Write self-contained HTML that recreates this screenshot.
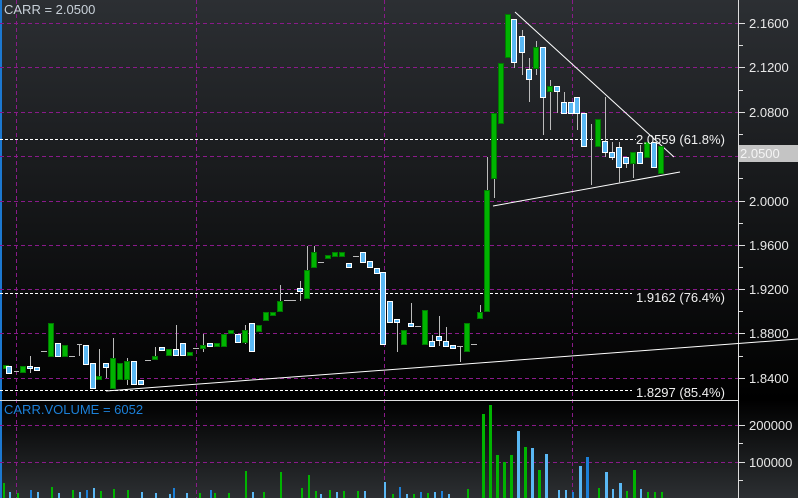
<!DOCTYPE html>
<html><head><meta charset="utf-8"><style>
html,body{margin:0;padding:0;background:#000;}
svg{display:block;font-family:"Liberation Sans",sans-serif;}
</style></head><body>
<svg width="798" height="498" viewBox="0 0 798 498" xmlns="http://www.w3.org/2000/svg">
<defs>
<linearGradient id="g1" x1="0" y1="0" x2="0" y2="1"><stop offset="0" stop-color="#2c2f33"/><stop offset="1" stop-color="#000"/></linearGradient>
<linearGradient id="g2" x1="0" y1="0" x2="0" y2="1"><stop offset="0" stop-color="#000"/><stop offset="1" stop-color="#2c2f32"/></linearGradient>
</defs>
<rect x="0" y="0" width="798" height="400" fill="url(#g1)"/>
<rect x="0" y="400" width="798" height="98" fill="url(#g2)"/>
<rect x="0" y="0" width="2" height="498" fill="#1c78d0"/>
<!-- grid -->
<g stroke="#8a1a8a" stroke-width="1" stroke-dasharray="4,3">
<line x1="0" y1="23.5" x2="738" y2="23.5"/><line x1="0" y1="67.5" x2="738" y2="67.5"/><line x1="0" y1="112.5" x2="738" y2="112.5"/><line x1="0" y1="156.5" x2="738" y2="156.5"/><line x1="0" y1="201.5" x2="738" y2="201.5"/><line x1="0" y1="245.5" x2="738" y2="245.5"/><line x1="0" y1="289.5" x2="738" y2="289.5"/><line x1="0" y1="333.5" x2="738" y2="333.5"/><line x1="0" y1="378.5" x2="738" y2="378.5"/>
<line x1="0" y1="425.5" x2="738" y2="425.5"/><line x1="0" y1="462.5" x2="738" y2="462.5"/>
<line x1="16.5" y1="0" x2="16.5" y2="498"/><line x1="196.5" y1="0" x2="196.5" y2="498"/><line x1="384.5" y1="0" x2="384.5" y2="498"/><line x1="572.5" y1="0" x2="572.5" y2="498"/>
</g>
<g stroke="#fff" stroke-width="1" stroke-dasharray="3,2">
<line x1="0" y1="139.5" x2="636" y2="139.5"/><line x1="0" y1="293.5" x2="632" y2="293.5"/><line x1="0" y1="390.5" x2="632" y2="390.5"/>
</g>
<!-- axis -->
<line x1="738.5" y1="0" x2="738.5" y2="498" stroke="#ddd"/>
<line x1="0" y1="400.5" x2="738" y2="400.5" stroke="#ddd"/>
<g stroke="#ddd"><line x1="739" y1="23.5" x2="745" y2="23.5"/><line x1="739" y1="45.5" x2="743" y2="45.5"/><line x1="739" y1="67.5" x2="745" y2="67.5"/><line x1="739" y1="90.5" x2="743" y2="90.5"/><line x1="739" y1="112.5" x2="745" y2="112.5"/><line x1="739" y1="134.5" x2="743" y2="134.5"/><line x1="739" y1="178.5" x2="743" y2="178.5"/><line x1="739" y1="201.5" x2="745" y2="201.5"/><line x1="739" y1="223.5" x2="743" y2="223.5"/><line x1="739" y1="245.5" x2="745" y2="245.5"/><line x1="739" y1="267.5" x2="743" y2="267.5"/><line x1="739" y1="289.5" x2="745" y2="289.5"/><line x1="739" y1="311.5" x2="743" y2="311.5"/><line x1="739" y1="333.5" x2="745" y2="333.5"/><line x1="739" y1="356.5" x2="743" y2="356.5"/><line x1="739" y1="378.5" x2="745" y2="378.5"/><line x1="739" y1="425.5" x2="745" y2="425.5"/><line x1="739" y1="443.5" x2="743" y2="443.5"/><line x1="739" y1="462.5" x2="745" y2="462.5"/><line x1="739" y1="480.5" x2="743" y2="480.5"/></g>
<g fill="#e8e8e8" font-size="13">
<text x="749" y="28">2.1600</text><text x="749" y="72">2.1200</text><text x="749" y="117">2.0800</text><text x="749" y="206">2.0000</text><text x="749" y="250">1.9600</text><text x="749" y="294">1.9200</text><text x="749" y="338">1.8800</text><text x="749" y="383">1.8400</text>
<text x="749" y="430">200000</text><text x="749" y="467">100000</text>
</g>
<rect x="739" y="145" width="59" height="17" fill="#c4c4c4"/>
<text x="740" y="158" fill="#f4f4f4" font-size="13">2.0500</text>
<text x="4" y="14" fill="#c8d0d8" font-size="13">CARR = 2.0500</text>
<text x="4" y="414" fill="#1c80d8" font-size="13">CARR.VOLUME = 6052</text>
<!-- trendlines -->
<g stroke="#fff" stroke-width="1" fill="none">
<polyline points="515,12 674,157"/>
<polyline points="493,206 680,172"/>
<polyline points="106,391 798,339"/>
</g>
<!-- wicks -->
<g stroke="#bbb" stroke-width="1">
<line x1="30.5" y1="356" x2="30.5" y2="373"/><line x1="79.5" y1="344" x2="79.5" y2="356"/><line x1="99.5" y1="349" x2="99.5" y2="379"/><line x1="106.5" y1="363" x2="106.5" y2="378"/><line x1="113.5" y1="338" x2="113.5" y2="388"/><line x1="127.5" y1="358" x2="127.5" y2="385"/><line x1="155.5" y1="347" x2="155.5" y2="359"/><line x1="176.5" y1="325" x2="176.5" y2="355"/><line x1="203.5" y1="334" x2="203.5" y2="352"/><line x1="245.5" y1="325" x2="245.5" y2="344"/><line x1="280.5" y1="285" x2="280.5" y2="311"/><line x1="300.5" y1="281" x2="300.5" y2="301"/><line x1="307.5" y1="246" x2="307.5" y2="298"/><line x1="314.5" y1="246" x2="314.5" y2="267"/><line x1="397.5" y1="319" x2="397.5" y2="352"/><line x1="411.5" y1="303" x2="411.5" y2="326"/><line x1="432.5" y1="335" x2="432.5" y2="346"/><line x1="439.5" y1="316" x2="439.5" y2="346"/><line x1="446.5" y1="327" x2="446.5" y2="346"/><line x1="460.5" y1="346" x2="460.5" y2="362"/><line x1="480.5" y1="305" x2="480.5" y2="318"/><line x1="487.5" y1="157" x2="487.5" y2="311"/><line x1="494.5" y1="113" x2="494.5" y2="198"/><line x1="514.5" y1="19" x2="514.5" y2="68"/><line x1="522.5" y1="30" x2="522.5" y2="75"/><line x1="529.5" y1="58" x2="529.5" y2="102"/><line x1="536.5" y1="41" x2="536.5" y2="75"/><line x1="543.5" y1="47" x2="543.5" y2="135"/><line x1="550.5" y1="80" x2="550.5" y2="130"/><line x1="557.5" y1="86" x2="557.5" y2="113"/><line x1="564.5" y1="92" x2="564.5" y2="113"/><line x1="577.5" y1="97" x2="577.5" y2="130"/><line x1="591.5" y1="124" x2="591.5" y2="185"/><line x1="605.5" y1="97" x2="605.5" y2="157"/><line x1="612.5" y1="142" x2="612.5" y2="160"/><line x1="619.5" y1="142" x2="619.5" y2="183"/><line x1="626.5" y1="157" x2="626.5" y2="168"/><line x1="633.5" y1="152" x2="633.5" y2="178"/><line x1="640.5" y1="145" x2="640.5" y2="163"/>
<line x1="14" y1="371.5" x2="19" y2="371.5"/><line x1="41" y1="351.5" x2="47" y2="351.5"/><line x1="69" y1="356.5" x2="75" y2="356.5"/><line x1="77" y1="344.5" x2="82" y2="344.5"/><line x1="145" y1="360.5" x2="151" y2="360.5"/><line x1="193" y1="348.5" x2="199" y2="348.5"/><line x1="284" y1="300.5" x2="296" y2="300.5"/><line x1="318" y1="262.5" x2="324" y2="262.5"/><line x1="353" y1="256.5" x2="359" y2="256.5"/><line x1="415" y1="326.5" x2="421" y2="326.5"/><line x1="457" y1="346.5" x2="463" y2="346.5"/><line x1="471" y1="344.5" x2="477" y2="344.5"/>
</g>
<!-- green candles -->
<g fill="#00b400" stroke="#007a00" stroke-width="1">
<rect x="3.5" y="365.5" width="5" height="3"/><rect x="20.5" y="366.5" width="5" height="6"/><rect x="48.5" y="323.5" width="5" height="33"/><rect x="62.5" y="345.5" width="5" height="11"/><rect x="96.5" y="376.5" width="5" height="3"/><rect x="110.5" y="358.5" width="5" height="30"/><rect x="117.5" y="363.5" width="5" height="16"/><rect x="124.5" y="361.5" width="5" height="18"/><rect x="152.5" y="356.5" width="5" height="3"/><rect x="166.5" y="349.5" width="5" height="6"/><rect x="187.5" y="352.5" width="5" height="3"/><rect x="200.5" y="345.5" width="5" height="3"/><rect x="214.5" y="343.5" width="5" height="3"/><rect x="221.5" y="334.5" width="5" height="12"/><rect x="228.5" y="330.5" width="5" height="3"/><rect x="242.5" y="330.5" width="5" height="12"/><rect x="256.5" y="325.5" width="5" height="6"/><rect x="263.5" y="312.5" width="5" height="8"/><rect x="270.5" y="312.5" width="5" height="3"/><rect x="277.5" y="301.5" width="5" height="10"/><rect x="304.5" y="270.5" width="5" height="28"/><rect x="311.5" y="252.5" width="5" height="15"/><rect x="325.5" y="255.5" width="5" height="3"/><rect x="332.5" y="252.5" width="5" height="4"/><rect x="339.5" y="252.5" width="5" height="4"/><rect x="401.5" y="330.5" width="5" height="14"/><rect x="422.5" y="310.5" width="5" height="34"/><rect x="464.5" y="323.5" width="5" height="28"/><rect x="477.5" y="312.5" width="5" height="6"/><rect x="484.5" y="190.5" width="5" height="121"/><rect x="491.5" y="113.5" width="5" height="65"/><rect x="498.5" y="63.5" width="5" height="60"/><rect x="505.5" y="14.5" width="5" height="43"/><rect x="533.5" y="47.5" width="5" height="21"/><rect x="547.5" y="86.5" width="5" height="5"/><rect x="595.5" y="119.5" width="5" height="27"/><rect x="630.5" y="152.5" width="5" height="11"/><rect x="644.5" y="142.5" width="5" height="15"/><rect x="658.5" y="146.5" width="5" height="27"/>
</g>
<!-- blue candles -->
<g fill="#5ab8f4" stroke="#fff" stroke-width="1">
<rect x="6.5" y="366.5" width="5" height="7"/><rect x="27.5" y="366.5" width="5" height="2"/><rect x="34.5" y="367.5" width="5" height="3"/><rect x="55.5" y="343.5" width="5" height="13"/><rect x="83.5" y="345.5" width="5" height="19"/><rect x="90.5" y="363.5" width="5" height="25"/><rect x="103.5" y="363.5" width="5" height="4"/><rect x="131.5" y="361.5" width="5" height="23"/><rect x="138.5" y="380.5" width="5" height="4"/><rect x="159.5" y="347.5" width="5" height="3"/><rect x="173.5" y="349.5" width="5" height="6"/><rect x="180.5" y="343.5" width="5" height="12"/><rect x="207.5" y="343.5" width="5" height="3"/><rect x="235.5" y="334.5" width="5" height="8"/><rect x="249.5" y="323.5" width="5" height="28"/><rect x="297.5" y="288.5" width="5" height="3"/><rect x="346.5" y="263.5" width="5" height="4"/><rect x="360.5" y="252.5" width="5" height="10"/><rect x="367.5" y="261.5" width="5" height="6"/><rect x="374.5" y="268.5" width="5" height="5"/><rect x="380.5" y="272.5" width="5" height="72"/><rect x="387.5" y="301.5" width="5" height="21"/><rect x="394.5" y="319.5" width="5" height="3"/><rect x="408.5" y="323.5" width="5" height="3"/><rect x="429.5" y="341.5" width="5" height="5"/><rect x="436.5" y="336.5" width="5" height="4"/><rect x="443.5" y="341.5" width="5" height="5"/><rect x="450.5" y="345.5" width="5" height="3"/><rect x="511.5" y="19.5" width="5" height="43"/><rect x="519.5" y="36.5" width="5" height="16"/><rect x="526.5" y="69.5" width="5" height="10"/><rect x="540.5" y="47.5" width="5" height="50"/><rect x="554.5" y="86.5" width="5" height="5"/><rect x="561.5" y="102.5" width="5" height="11"/><rect x="568.5" y="102.5" width="5" height="11"/><rect x="574.5" y="97.5" width="5" height="16"/><rect x="581.5" y="113.5" width="5" height="33"/><rect x="602.5" y="141.5" width="5" height="11"/><rect x="609.5" y="152.5" width="5" height="5"/><rect x="616.5" y="147.5" width="5" height="20"/><rect x="623.5" y="157.5" width="5" height="6"/><rect x="637.5" y="152.5" width="5" height="11"/><rect x="651.5" y="142.5" width="5" height="25"/>
</g>
<text x="636" y="144" fill="#f0f0f0" font-size="13">2.0559 (61.8%)</text>
<text x="636" y="302" fill="#f0f0f0" font-size="13">1.9162 (76.4%)</text>
<text x="636" y="397" fill="#f0f0f0" font-size="13">1.8297 (85.4%)</text>
<!-- volume -->
<g fill="#00b400">
<rect x="3" y="483" width="2" height="15"/><rect x="17" y="493" width="2" height="5"/><rect x="51" y="487" width="2" height="11"/><rect x="72" y="490" width="2" height="8"/><rect x="100" y="491" width="2" height="7"/><rect x="113" y="489" width="2" height="9"/><rect x="127" y="490" width="2" height="8"/><rect x="199" y="493" width="2" height="5"/><rect x="214" y="493" width="2" height="5"/><rect x="228" y="493" width="2" height="5"/><rect x="245" y="471" width="2" height="27"/><rect x="263" y="492" width="2" height="6"/><rect x="280" y="472" width="2" height="26"/><rect x="301" y="488" width="2" height="10"/><rect x="308" y="475" width="2" height="23"/><rect x="315" y="491" width="2" height="7"/><rect x="329" y="490" width="2" height="8"/><rect x="343" y="491" width="2" height="7"/><rect x="357" y="491" width="2" height="7"/><rect x="392" y="494" width="2" height="4"/><rect x="413" y="494" width="2" height="4"/><rect x="427" y="493" width="2" height="5"/><rect x="467" y="489" width="2" height="9"/><rect x="482" y="414" width="3" height="84"/><rect x="489" y="405" width="3" height="93"/><rect x="496" y="455" width="3" height="43"/><rect x="503" y="462" width="3" height="36"/><rect x="510" y="455" width="3" height="43"/><rect x="524" y="447" width="3" height="51"/><rect x="538" y="470" width="3" height="28"/><rect x="598" y="488" width="2" height="10"/><rect x="626" y="491" width="2" height="7"/><rect x="633" y="470" width="3" height="28"/><rect x="647" y="492" width="2" height="6"/><rect x="654" y="492" width="2" height="6"/><rect x="661" y="492" width="2" height="6"/>
</g>
<g fill="#5ab8f4">
<rect x="9" y="492" width="2" height="6"/><rect x="37" y="492" width="2" height="6"/><rect x="58" y="493" width="2" height="5"/><rect x="79" y="492" width="2" height="6"/><rect x="93" y="488" width="2" height="10"/><rect x="141" y="492" width="2" height="6"/><rect x="155" y="493" width="2" height="5"/><rect x="169" y="494" width="2" height="4"/><rect x="186" y="493" width="2" height="5"/><rect x="252" y="492" width="2" height="6"/><rect x="320" y="494" width="2" height="4"/><rect x="336" y="492" width="2" height="6"/><rect x="364" y="491" width="2" height="7"/><rect x="384" y="482" width="2" height="16"/><rect x="406" y="494" width="2" height="4"/><rect x="434" y="492" width="2" height="6"/><rect x="448" y="494" width="2" height="4"/><rect x="517" y="431" width="3" height="67"/><rect x="531" y="448" width="3" height="50"/><rect x="545" y="454" width="3" height="44"/><rect x="558" y="490" width="2" height="8"/><rect x="565" y="490" width="2" height="8"/><rect x="579" y="466" width="3" height="32"/><rect x="605" y="472" width="3" height="26"/><rect x="612" y="489" width="2" height="9"/><rect x="619" y="483" width="3" height="15"/><rect x="640" y="489" width="2" height="9"/>
</g>
<g fill="#1c80d8">
<rect x="30" y="490" width="2" height="8"/><rect x="86" y="490" width="2" height="8"/><rect x="173" y="488" width="2" height="10"/><rect x="210" y="490" width="2" height="8"/><rect x="399" y="487" width="2" height="11"/><rect x="420" y="492" width="2" height="6"/><rect x="441" y="491" width="2" height="7"/><rect x="586" y="457" width="3" height="41"/><rect x="572" y="492" width="2" height="6"/>
</g>
</svg>
</body></html>
